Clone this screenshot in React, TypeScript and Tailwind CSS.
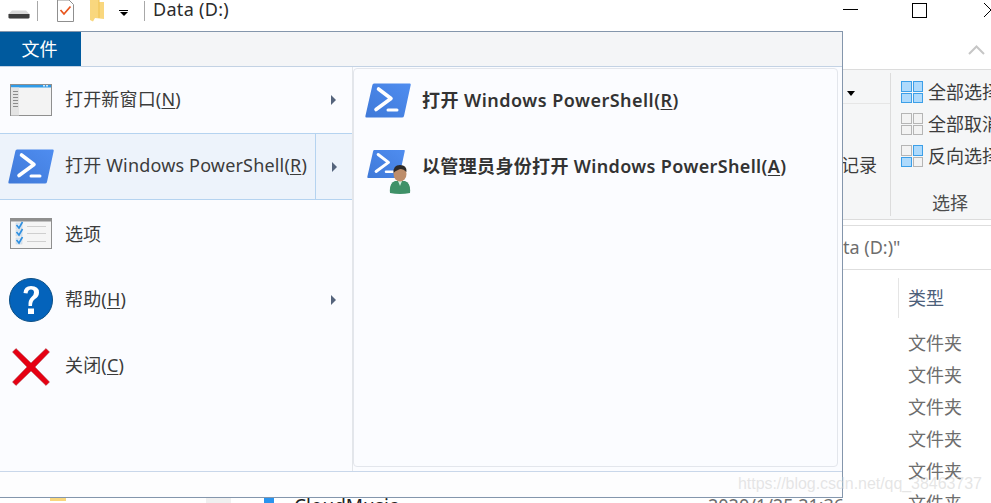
import React from 'react';

const PowerShellIcon = ({ id, className }: { id: string; className: string }) => (
  <svg viewBox="0 0 46 35" className={className}>
    <defs>
      <linearGradient id={id} x1="0" y1="1" x2="1" y2="0">
        <stop offset="0" stopColor="#3f79d8" />
        <stop offset="1" stopColor="#4f8df0" />
      </linearGradient>
    </defs>
    <path d="M9 0.5 H45 Q46 0.5 45.7 2 L39 33 Q38.6 34.5 37 34.5 H1.5 Q0 34.5 0.4 33 L7.4 2 Q7.7 0.5 9 0.5 Z" fill={`url(#${id})`} />
    <path d="M13.5 6 L26 15.5 L11 26.5" fill="none" stroke="#fff" strokeWidth="3.6" strokeLinecap="round" strokeLinejoin="round" />
    <path d="M23 27 H32" stroke="#fff" strokeWidth="3" strokeLinecap="round" />
  </svg>
);

const WindowIcon = () => (
  <svg viewBox="0 0 42 32" className="h-8 w-[42px]">
    <rect x="0.5" y="0.5" width="41" height="31" fill="#f3f3f3" stroke="#8f8f8f" />
    <rect x="1" y="1" width="40" height="2.5" fill="#2f9be8" />
    <rect x="1" y="3.5" width="8" height="28" fill="#e4e4e4" />
    {[7, 10, 13, 16, 19, 22].map((y) => (
      <rect key={y} x="3" y={y} width="5" height="1" fill="#8c8c8c" />
    ))}
    <rect x="33" y="1" width="2" height="1.5" fill="#cfe8fb" />
    <rect x="36" y="1" width="2" height="1.5" fill="#cfe8fb" />
  </svg>
);

const OptionsIcon = () => (
  <svg viewBox="0 0 42 31" className="h-[31px] w-[42px]">
    <rect x="0.5" y="0.5" width="41" height="30" fill="#f5f5f5" stroke="#8f8f8f" />
    <rect x="1" y="1" width="40" height="2.5" fill="#8f8f8f" />
    {[4, 11, 19].map((y) => (
      <g key={y}>
        <rect x="6" y={y + 1} width="6" height="6" fill="#d9e8f6" stroke="#c5cdd6" strokeWidth="0.5" />
        <path d={`M6.5 ${y + 3} L9 ${y + 6} L12.5 ${y}`} fill="none" stroke="#2f8fe0" strokeWidth="1.6" />
        <rect x="17" y={y + 4} width="19" height="1" fill="#cfcfcf" />
      </g>
    ))}
  </svg>
);

const HelpIcon = () => (
  <svg viewBox="0 0 44 44" className="h-11 w-11">
    <circle cx="22" cy="22" r="21.5" fill="#0463bb" stroke="#0b4f86" />
    <path d="M14.5 15 Q15 8 22 8 Q30 8 30 14.5 Q30 18.5 26 21 Q23 23 23 28 H19.5 Q19 22 22.5 19 Q25 17 25 14.5 Q25 11.5 22 11.5 Q19 11.5 18.5 15.5 Z" fill="#fff" />
    <rect x="19" y="30.5" width="6" height="5.5" fill="#fff" />
  </svg>
);

const CloseIcon = () => (
  <svg viewBox="0 0 38 38" className="h-[38px] w-[38px]">
    <path d="M4 0.5 L19 15 L34 0.5 L37.5 4 L23 19 L37.5 34 L34 37.5 L19 23 L4 37.5 L0.5 34 L15 19 L0.5 4 Z" fill="#e60012" stroke="#a3414a" strokeWidth="0.5" />
  </svg>
);

const AdminBadge = () => (
  <svg viewBox="0 0 22 30" className="absolute left-[22px] top-[15px] h-[30px] w-[22px]">
    <path d="M1 29 Q0 19 6 17 L16 17 Q22 19 21 29 Q11 31 1 29 Z" fill="#3f9168" />
    <path d="M9 17 L11 22 L13 17 Z" fill="#cdeedd" />
    <ellipse cx="11" cy="10" rx="6.5" ry="7.5" fill="#bd8d6b" />
    <path d="M4.5 9 Q4 1 11 1 Q18 1 17.5 8 Q13 3.5 9 6 Q6 7 4.5 9 Z" fill="#2d2a28" />
  </svg>
);

const Arrow = () => (
  <span className="h-0 w-0 border-y-[5px] border-l-[5px] border-y-transparent border-l-[#55647c]" />
);

const MenuText = ({ label, hotkey }: { label: string; hotkey: string }) => (
  <span className="mt-[-3px] whitespace-nowrap text-[18px] leading-6 tracking-[0.17px] text-[#3c3c3c]">
    {label}(<span className="underline underline-offset-2">{hotkey}</span>)
  </span>
);

const SelectIcon = ({ on }: { on: boolean[] }) => (
  <span className="grid h-[22px] w-[22px] grid-cols-2 gap-[1px]">
    {on.map((active, i) => (
      <span
        key={i}
        className={active ? 'border border-[#3c9fe8] bg-[#aedafc]' : 'border border-[#b5b5b5] bg-[#f3f3f3]'}
      />
    ))}
  </span>
);

export default function App() {
  return (
    <div className="relative h-[503px] w-[991px] overflow-hidden bg-white font-['Noto_Sans','Noto_Sans_CJK_SC',sans-serif] text-[18px] text-[#3c3c3c]">
      {/* explorer window behind the menu */}
      <div className="flex h-[31px] items-start [&>*]:shrink-0">
        <svg viewBox="0 0 22 9" className="ml-2 mt-[10px] h-[9px] w-[22px]">
          <path d="M4 0.5 H18 L21.5 4 V7.5 Q21.5 8.5 20 8.5 H2 Q0.5 8.5 0.5 7.5 V4 Z" fill="#d9d9d9" />
          <path d="M0.5 4 L21.5 4 V7.5 Q21.5 8.5 20 8.5 H2 Q0.5 8.5 0.5 7.5 Z" fill="#3d3d3d" />
        </svg>
        <span className="ml-[7px] mt-[1px] h-5 w-px bg-[#a8a8a8]" />
        <svg viewBox="0 0 17 22" className="ml-[19px] h-[22px] w-[17px]">
          <path d="M0.5 0 H12 L16.5 4.5 V21.5 H0.5 Z" fill="#fff" stroke="#8f8f8f" />
          <path d="M3.5 10 L7 14 L13.5 6.5" fill="none" stroke="#e8561e" strokeWidth="1.8" />
        </svg>
        <svg viewBox="0 0 14 22" className="ml-[16px] h-[22px] w-[14px]">
          <path d="M0 0 H9 V2 H14 V19 L5 18 L3 21.5 L0 20 Z" fill="#f9d77e" />
          <path d="M9 0 V18" stroke="#efc14e" strokeWidth="1" />
        </svg>
        <span className="ml-[15px] mt-[10px] flex flex-col items-center gap-[1px]">
          <span className="h-px w-[9px] bg-black" />
          <span className="h-0 w-0 border-x-[4px] border-t-[4px] border-x-transparent border-t-black" />
        </span>
        <span className="ml-[16px] mt-[1px] h-5 w-px bg-[#a8a8a8]" />
        <span className="ml-[8px] mt-[-3px] w-[76px] whitespace-nowrap leading-6 tracking-[0.3px] text-[#2b2b2b]">Data (D:)</span>
        <span className="ml-[614px] mt-[9px] h-px w-[15px] bg-black" />
        <span className="ml-[54px] mt-[3px] h-[15px] w-[15px] border border-black" />
        <svg viewBox="0 0 10 15" className="ml-[56px] mt-[2px] h-[15px] w-[10px]">
          <path d="M1 1 L8 8 L1 15" fill="none" stroke="#000" />
        </svg>
      </div>

      <div className="flex h-[38px] items-start justify-end pr-[6px] pt-[14px]">
        <svg viewBox="0 0 17 10" className="h-[10px] w-[17px]">
          <path d="M1 9 L8.5 1.5 L16 9" fill="none" stroke="#c6c6c6" strokeWidth="2" />
        </svg>
      </div>

      <div className="flex h-[151px] border-y border-[#dcdcdc] bg-[#f5f6f7]">
        <div className="w-[890px] shrink-0">
          <div className="ml-[843px] flex h-[34px] items-end border-b border-[#e6e6e6] pb-[7px]">
            <span className="ml-[4px] h-0 w-0 border-x-[4px] border-t-[5px] border-x-transparent border-t-black" />
          </div>
          <div className="mt-[49px] pr-[13px] text-right leading-6">记录</div>
        </div>
        <div className="my-[3px] w-px shrink-0 bg-[#dcdcdc]" />
        <div className="flex flex-col pl-[10px] pt-[6px]">
          {[
            { label: '全部选择', on: [true, true, true, true] },
            { label: '全部取消', on: [false, false, false, false] },
            { label: '反向选择', on: [false, true, true, false] },
          ].map((row) => (
            <div key={row.label} className="flex h-8 items-center gap-[5px] whitespace-nowrap">
              <SelectIcon on={row.on} />
              {row.label}
            </div>
          ))}
          <div className="mt-[19px] pl-[31px] leading-6 text-[#4d4d4d]">选择</div>
        </div>
      </div>

      <div className="mt-[5px] flex h-[45px] items-center border-y border-[#dedede] pl-[843px] text-[#6d6d6d]">
        ta (D:)"
      </div>

      <div className="flex h-[57px] pl-[898px] pt-[8px]">
        <div className="flex h-10 items-center border-l border-[#e5e5e5] pl-[9px] text-[#4c607a]">类型</div>
      </div>

      <div className="flex flex-col">
        {[0, 1, 2, 3, 4].map((i) => (
          <div key={i} className="flex h-8 items-center pl-[908px] leading-6 text-[#6d6d6d]">
            文件夹
          </div>
        ))}
        <div className="relative flex h-8 items-center pl-[908px] leading-6 text-[#6d6d6d]">
          文件夹
          <span className="absolute left-[50px] top-[10px] h-1 w-4 bg-[#f9d77e]" />
          <span className="absolute left-[206px] top-[10px] h-6 w-[25px] bg-[#f0f0f0]" />
          <span className="absolute left-[264px] top-[10px] h-6 w-[10px] bg-[#2a94ee]" />
          <span className="absolute left-[294px] top-[7px] text-[19px] leading-6 text-[#222]">CloudMusic</span>
          <span className="absolute left-[708px] top-[6px] whitespace-nowrap leading-6 text-[#6d6d6d]">2020/1/25 21:36</span>
        </div>
      </div>

      {/* file menu */}
      <div className="absolute left-0 top-[31px] flex h-[467px] w-[843px] flex-col border-y border-r border-[#8496ac] bg-[#fbfcff]">
        <div className="h-[34px] bg-[#f4f5f7]">
          <div className="flex h-[34px] w-[81px] items-center justify-center bg-[#005a9e] pr-[2px] text-white">文件</div>
        </div>
        <div className="flex h-[405px] border-t border-[#c3d2e4]">
          <div className="w-[353px] shrink-0 border-r border-[#e3e6ea]">
            <div className="flex h-[66px] items-center">
              <span className="ml-[10px] flex w-[55px]"><WindowIcon /></span>
              <MenuText label="打开新窗口" hotkey="N" />
              <span className="ml-auto mr-[16px] flex"><Arrow /></span>
            </div>
            <div className="flex h-[67px] items-center border-y border-[#b5d3f0] bg-[#edf3fb]">
              <span className="ml-[8px] flex w-[57px]"><PowerShellIcon id="ps-left" className="h-[35px] w-[46px]" /></span>
              <MenuText label="打开 Windows PowerShell" hotkey="R" />
              <span className="ml-auto flex h-full w-[37px] items-center justify-center border-l border-[#b5d3f0] pl-px"><Arrow /></span>
            </div>
            <div className="flex h-[67px] items-center">
              <span className="ml-[10px] flex w-[55px]"><OptionsIcon /></span>
              <span className="text-[18px] leading-6">选项</span>
            </div>
            <div className="flex h-[66px] items-center">
              <span className="ml-[9px] flex w-[56px]"><HelpIcon /></span>
              <MenuText label="帮助" hotkey="H" />
              <span className="ml-auto mr-[16px] flex"><Arrow /></span>
            </div>
            <div className="flex h-[67px] items-center">
              <span className="ml-[12px] flex w-[53px]"><CloseIcon /></span>
              <MenuText label="关闭" hotkey="C" />
            </div>
          </div>
          <div className="mb-[4px] mr-[4px] mt-px flex-1 rounded-sm border border-[#e3e6ec] bg-[#fbfcff] pt-[14px]">
            <div className="flex h-[66px] items-start pl-[11px]">
              <PowerShellIcon id="ps-right" className="h-[35px] w-[46px]" />
              <span className="ml-[11px] mt-[5px] whitespace-nowrap font-semibold leading-6 tracking-[0.48px] text-[#333]">
                打开 Windows PowerShell(<span className="underline underline-offset-2">R</span>)
              </span>
            </div>
            <div className="flex h-[46px] items-start pl-[13px]">
              <span className="relative block h-[45px] w-[44px]">
                <PowerShellIcon id="ps-admin" className="h-[30px] w-[38px]" />
                <AdminBadge />
              </span>
              <span className="ml-[11px] mt-[5px] whitespace-nowrap font-semibold leading-6 tracking-[0.35px] text-[#333]">
                以管理员身份打开 Windows PowerShell(<span className="underline underline-offset-2">A</span>)
              </span>
            </div>
          </div>
        </div>
        <div className="h-[25px] border-t border-[#c9d7ea] bg-[#fdfdfe]" />
      </div>

      {/* blog watermark */}
      <span className="absolute left-[738px] top-[474px] whitespace-nowrap font-['Liberation_Sans',sans-serif] text-[16px] leading-5 tracking-[-0.05px] text-[#d4d4d4]/60">
        https://blog.csdn.net/qq_38463737
      </span>
    </div>
  );
}
